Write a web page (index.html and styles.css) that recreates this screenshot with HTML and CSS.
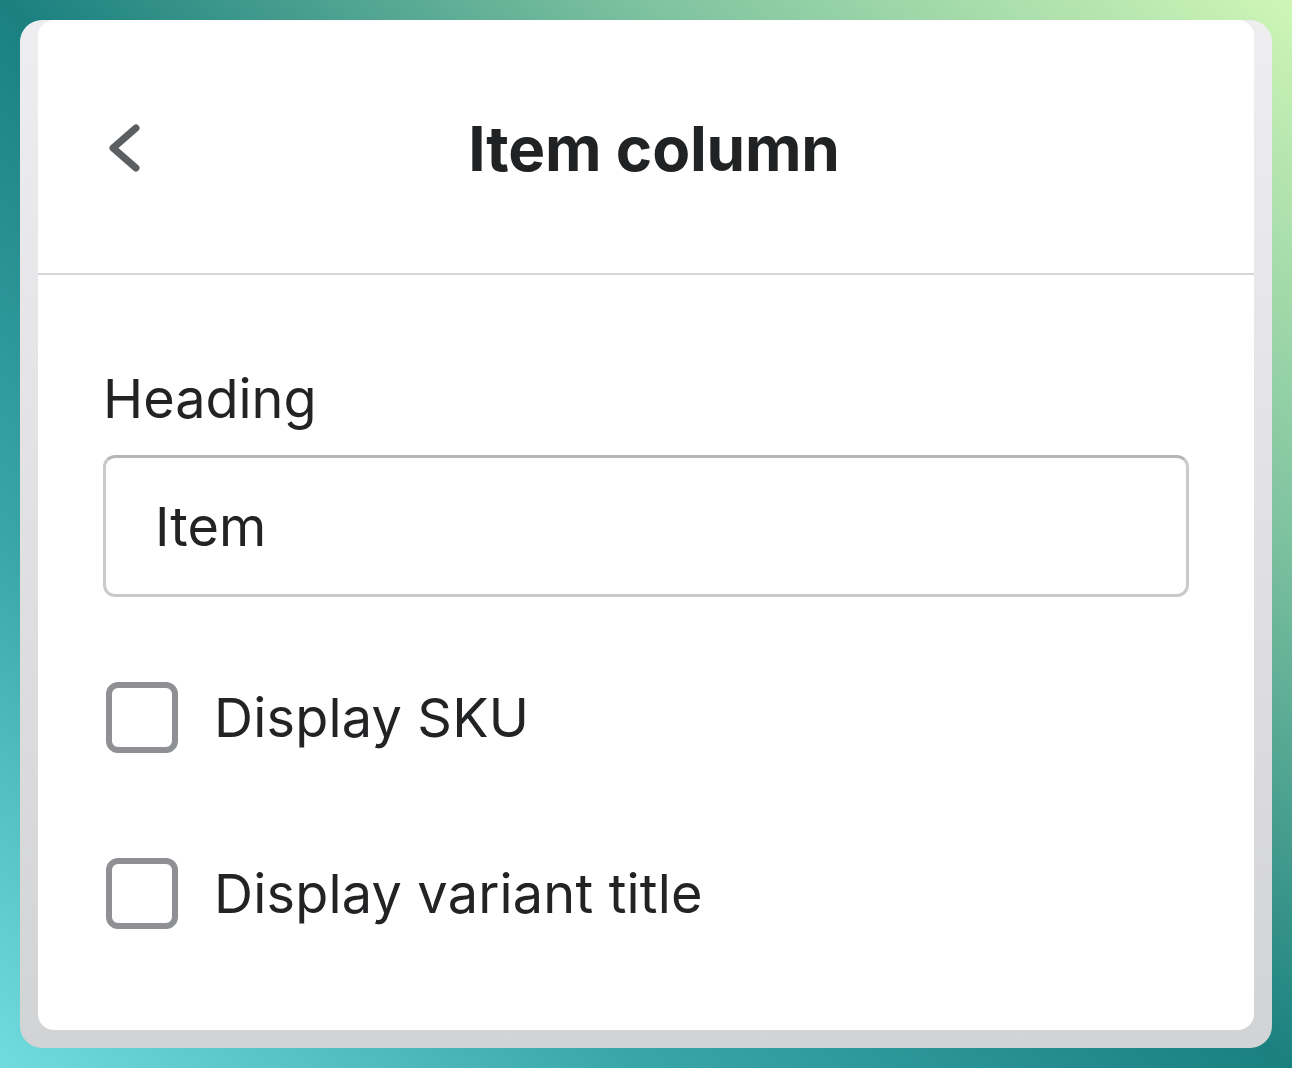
FILE: index.html
```html
<!DOCTYPE html>
<html>
<head>
<meta charset="utf-8">
<link rel="stylesheet" href="styles.css">
</head>
<body>
<div class="page">
  <div class="card">
    <div class="panel">
      <div class="header">
        <svg class="back" width="40" height="56" viewBox="0 0 40 56">
          <polyline points="31,8 8,28 31,48" fill="none" stroke="#5c5f62" stroke-width="7" stroke-linecap="round" stroke-linejoin="round"/>
        </svg>
        <h1 class="title">Item column</h1>
      </div>
      <div class="content">
        <label class="label">Heading</label>
        <div class="input">Item</div>
        <div class="check">
          <span class="box"></span>
          <span class="check-label">Display SKU</span>
        </div>
        <div class="check">
          <span class="box"></span>
          <span class="check-label">Display variant title</span>
        </div>
      </div>
    </div>
  </div>
</div>
</body>
</html>
```

FILE: styles.css
```css
html, body {
  margin: 0;
  padding: 0;
}
body {
  width: 1292px;
  height: 1068px;
  overflow: hidden;
  font-family: "Inter", "Noto Sans", sans-serif;
  background: linear-gradient(to bottom left, #cff6b6 0%, #7fc3a0 25%, #1a8080 50%, #3aa5a8 75%, #72dbe0 100%);
}
.page {
  box-sizing: border-box;
  height: 1068px;
  padding: 20px;
}
.card {
  box-sizing: border-box;
  height: 1028px;
  border-radius: 22px;
  background: linear-gradient(to bottom, #eeeef0, #d2d3d5);
  padding: 0 18px 18px 18px;
  display: flex;
}
.panel {
  flex: 1;
  background: #fff;
  border-radius: 16px;
  display: flex;
  flex-direction: column;
}
.header {
  height: 253px;
  border-bottom: 2px solid #d6d7d8;
  display: flex;
  align-items: center;
  position: relative;
}
.back {
  position: absolute;
  left: 67px;
  top: 100px;
}
.title {
  flex: 1;
  margin: 0;
  text-align: center;
  font-size: 62px;
  font-weight: 700;
  color: #202223;
  letter-spacing: -0.2px;
  padding: 4px 0 0 16px;
}
.content {
  padding: 96px 65px 0 65px;
  display: flex;
  flex-direction: column;
}
.label {
  font-size: 54px;
  color: #222325;
  line-height: 56px;
}
.input {
  margin-top: 28px;
  border: 3px solid #c9cacc;
  border-top-color: #b4b6b8;
  border-radius: 12px;
  box-sizing: border-box;
  height: 142px;
  display: flex;
  align-items: center;
  padding-left: 49px;
  font-size: 54px;
  color: #222325;
}
.check {
  display: flex;
  align-items: center;
  margin-top: 84px;
  height: 72px;
}
.check + .check {
  margin-top: 104px;
}
.box {
  box-sizing: border-box;
  width: 72px;
  height: 71px;
  border: 6px solid #8e9093;
  border-radius: 12px;
  margin-left: 3px;
}
.check-label {
  margin-left: 36px;
  font-size: 54px;
  letter-spacing: 0.2px;
  color: #222325;
}
```
